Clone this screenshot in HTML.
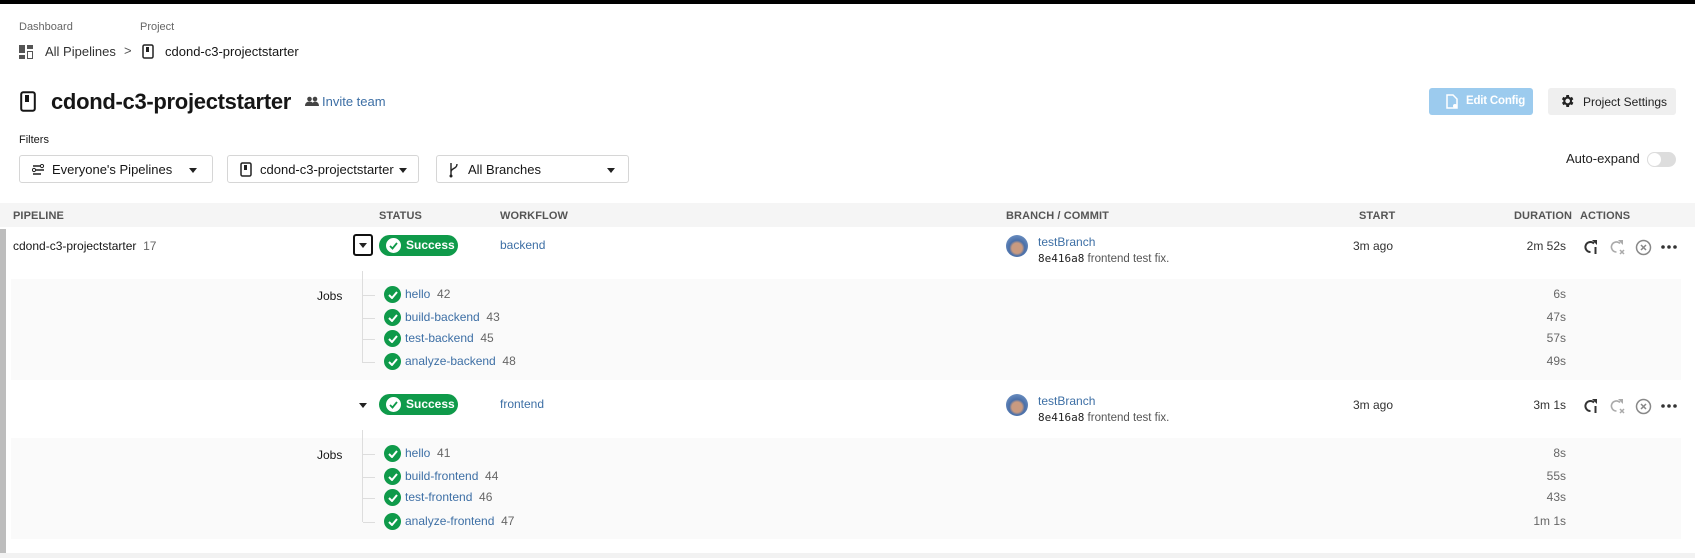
<!DOCTYPE html>
<html><head><meta charset="utf-8"><style>
*{box-sizing:border-box;margin:0;padding:0}
body{width:1695px;height:558px;overflow:hidden;background:#fff;font-family:"Liberation Sans",sans-serif;color:#161616;position:relative}
.a{position:absolute;white-space:nowrap}
.lnk{color:#3d6fa5}
.g{color:#666}
.hd{font-size:11px;font-weight:bold;color:#555;letter-spacing:.1px}
.dd{position:absolute;top:155px;height:28px;border:1px solid #d6d6d6;border-radius:3px;background:#fff;font-size:13px}
.dd span{position:absolute;top:6px}
.tri{position:absolute;width:0;height:0;border-left:4px solid transparent;border-right:4px solid transparent;border-top:5px solid #222}
.pill{position:absolute;width:79px;height:21px;border-radius:11px;background:#0f9a4a;color:#fff;font-size:12px;font-weight:bold}
.pill i{position:absolute;left:7px;top:3px;width:15px;height:15px;border-radius:50%;background:#fff}
.pill b{position:absolute;left:27px;top:3px}
.chk{position:absolute;width:17px;height:17px;border-radius:50%;background:#0f9a4a}
.job{position:absolute;font-size:12px}
.dur{position:absolute;font-size:12px;color:#666;text-align:right;width:60px}
</style></head><body>
<div class="a" style="left:0;top:0;width:1695px;height:4px;background:#000"></div>
<div class="a g" style="left:19px;top:21px;font-size:11px">Dashboard</div>
<div class="a g" style="left:140px;top:21px;font-size:11px">Project</div>
<svg class="a" style="left:19px;top:45px" width="15" height="14"><rect x="0" y="0" width="6" height="8" fill="#555"/><rect x="8" y="0" width="6" height="4" fill="#555"/><rect x="0" y="10" width="6" height="4" fill="#555"/><rect x="8.5" y="6.5" width="5" height="7" fill="none" stroke="#555"/></svg>
<div class="a" style="left:45px;top:44px;font-size:13px;color:#333">All Pipelines</div>
<div class="a" style="left:124px;top:43px;font-size:13px;color:#555">&gt;</div>
<svg class="a" style="left:142px;top:44px" width="12" height="15"><rect x="1" y="1" width="10" height="13" rx="1.5" fill="none" stroke="#222" stroke-width="1.5"/><rect x="4" y="3" width="3" height="5" fill="#222"/></svg>
<div class="a" style="left:165px;top:44px;font-size:13px">cdond-c3-projectstarter</div>

<svg class="a" style="left:20px;top:91px" width="16" height="21"><rect x="1.2" y="1.2" width="13.6" height="18.6" rx="2" fill="none" stroke="#161616" stroke-width="2"/><rect x="5" y="4" width="4" height="7" fill="#161616"/></svg>
<div class="a" style="left:51px;top:89px;font-size:22px;font-weight:bold;letter-spacing:-0.3px">cdond-c3-projectstarter</div>
<svg class="a" style="left:305px;top:96px" width="14" height="10"><circle cx="4.5" cy="3" r="2.3" fill="#444"/><circle cx="10" cy="3" r="2.3" fill="#444"/><path d="M0 10c0-3 2-4.5 4.5-4.5S9 7 9 10zM7 10c0-2 1-4.5 3-4.5s4 1.5 4 4.5z" fill="#444"/></svg>
<div class="a lnk" style="left:322px;top:94px;font-size:13px">Invite team</div>

<div class="a" style="left:1429px;top:88px;width:104px;height:27px;background:#9ccbee;border-radius:3px"></div>
<svg class="a" style="left:1446px;top:94px" width="12" height="15"><path d="M1 1h6l4 4v9H1z" fill="none" stroke="#fff" stroke-width="1.5"/><circle cx="9" cy="12" r="2" fill="#fff"/></svg>
<div class="a" style="left:1466px;top:95px;font-size:11.5px;font-weight:bold;color:#fff;letter-spacing:-0.2px">Edit Config</div>
<div class="a" style="left:1548px;top:88px;width:128px;height:27px;background:#efefef;border-radius:3px"></div>
<svg class="a" style="left:1559px;top:93px" width="16" height="16" viewBox="0 0 24 24"><path fill="#222" d="M19.4 13a7.5 7.5 0 0 0 0-2l2.1-1.6-2-3.5-2.5 1a7 7 0 0 0-1.7-1L15 3h-4l-.4 2.9a7 7 0 0 0-1.7 1l-2.5-1-2 3.5L6.6 11a7.5 7.5 0 0 0 0 2l-2.1 1.6 2 3.5 2.5-1a7 7 0 0 0 1.7 1L11 21h4l.4-2.9a7 7 0 0 0 1.7-1l2.5 1 2-3.5zM13 15.5a3.5 3.5 0 1 1 0-7 3.5 3.5 0 0 1 0 7z"/></svg>
<div class="a" style="left:1583px;top:95px;font-size:12px;color:#222">Project Settings</div>

<div class="a" style="left:19px;top:134px;font-size:11px">Filters</div>
<div class="dd" style="left:19px;width:194px"><svg style="position:absolute;left:12px;top:8px" width="13" height="11"><path d="M1 2h8M4 6h8M1 10h8" stroke="#222" stroke-width="1.4" fill="none"/><circle cx="10" cy="2" r="1.6" fill="none" stroke="#222"/><circle cx="2" cy="6" r="1.6" fill="none" stroke="#222"/></svg><span style="left:32px">Everyone's Pipelines</span><div class="tri" style="left:169px;top:12px"></div></div>
<div class="dd" style="left:227px;width:192px"><svg style="position:absolute;left:12px;top:6px" width="12" height="15"><rect x="1" y="1" width="10" height="13" rx="1.5" fill="none" stroke="#222" stroke-width="1.5"/><rect x="4" y="3" width="3" height="5" fill="#222"/></svg><span style="left:32px">cdond-c3-projectstarter</span><div class="tri" style="left:171px;top:12px"></div></div>
<div class="dd" style="left:436px;width:193px"><svg style="position:absolute;left:12px;top:6px" width="10" height="16"><path d="M2 1v14M2 10c0-4 6-3 6-8" stroke="#222" stroke-width="1.4" fill="none"/><circle cx="2" cy="14" r="1.5" fill="#222"/></svg><span style="left:31px">All Branches</span><div class="tri" style="left:170px;top:12px"></div></div>

<div class="a" style="left:1566px;top:151px;font-size:13px;color:#222">Auto-expand</div>
<div class="a" style="left:1647px;top:152px;width:29px;height:15px;border-radius:8px;background:#ddd"></div>
<div class="a" style="left:1647px;top:152px;width:15px;height:15px;border-radius:50%;background:#fff;border:1px solid #ddd"></div>

<div class="a" style="left:0;top:203px;width:1695px;height:24px;background:#f5f5f5"></div>
<div class="a hd" style="left:13px;top:210px">PIPELINE</div>
<div class="a hd" style="left:379px;top:210px">STATUS</div>
<div class="a hd" style="left:500px;top:210px">WORKFLOW</div>
<div class="a hd" style="left:1006px;top:210px">BRANCH / COMMIT</div>
<div class="a hd" style="left:1359px;top:210px">START</div>
<div class="a hd" style="left:1514px;top:210px">DURATION</div>
<div class="a hd" style="left:1580px;top:210px">ACTIONS</div>

<div class="a" style="left:0;top:229px;width:6px;height:324px;background:#bdbdbd"></div>
<div class="a" style="left:0;top:553px;width:1695px;height:5px;background:#f2f2f2"></div>

<div class="a" style="left:13px;top:239px;font-size:12px">cdond-c3-projectstarter <span class="g">&nbsp;17</span></div>
<div class="a" style="left:353px;top:234px;width:20px;height:22px;border:2px solid #111;border-radius:3px"></div>
<div class="tri" style="left:359px;top:243px"></div>
<div class="pill" style="left:379px;top:235px"><i></i><svg style="position:absolute;left:10px;top:7px" width="9" height="8"><path d="M1 4l2.5 2.5L8 1" stroke="#0f9a4a" stroke-width="1.8" fill="none"/></svg><b>Success</b></div>
<div class="a lnk" style="left:500px;top:238px;font-size:12px">backend</div>
<div class="a" style="left:1006px;top:235px;width:22px;height:22px;border-radius:50%;background:radial-gradient(circle at 50% 60%,#c99a80 0 30%,#4a6fa8 45%,#7fa2d0)"></div>
<div class="a lnk" style="left:1038px;top:235px;font-size:12px">testBranch</div>
<div class="a" style="left:1038px;top:252px;font-size:11.5px;color:#555"><span style="font-family:'DejaVu Sans Mono',monospace;color:#222;font-size:11px">8e416a8</span> frontend test fix.</div>
<div class="a" style="left:1353px;top:239px;font-size:12px;color:#333">3m ago</div>
<div class="dur" style="left:1506px;top:239px;color:#333">2m 52s</div>

<div class="a" style="left:11px;top:279px;width:1670px;height:101px;background:#fafafa"></div>
<div class="a" style="left:362px;top:271px;width:1px;height:92px;background:#ddd"></div>
<div class="a" style="left:317px;top:289px;font-size:12px">Jobs</div>

<div class="tri" style="left:359px;top:403px"></div>
<div class="pill" style="left:379px;top:394px"><i></i><svg style="position:absolute;left:10px;top:7px" width="9" height="8"><path d="M1 4l2.5 2.5L8 1" stroke="#0f9a4a" stroke-width="1.8" fill="none"/></svg><b>Success</b></div>
<div class="a lnk" style="left:500px;top:397px;font-size:12px">frontend</div>
<div class="a" style="left:1006px;top:394px;width:22px;height:22px;border-radius:50%;background:radial-gradient(circle at 50% 60%,#c99a80 0 30%,#4a6fa8 45%,#7fa2d0)"></div>
<div class="a lnk" style="left:1038px;top:394px;font-size:12px">testBranch</div>
<div class="a" style="left:1038px;top:411px;font-size:11.5px;color:#555"><span style="font-family:'DejaVu Sans Mono',monospace;color:#222;font-size:11px">8e416a8</span> frontend test fix.</div>
<div class="a" style="left:1353px;top:398px;font-size:12px;color:#333">3m ago</div>
<div class="dur" style="left:1506px;top:398px;color:#333">3m 1s</div>

<div class="a" style="left:11px;top:438px;width:1670px;height:101px;background:#fafafa"></div>
<div class="a" style="left:362px;top:430px;width:1px;height:92px;background:#ddd"></div>
<div class="a" style="left:317px;top:448px;font-size:12px">Jobs</div>

<div id="jobs"></div>
<script>
var J=[[295,"hello","42","6s"],[318,"build-backend","43","47s"],[339,"test-backend","45","57s"],[362,"analyze-backend","48","49s"],
[454,"hello","41","8s"],[477,"build-frontend","44","55s"],[498,"test-frontend","46","43s"],[522,"analyze-frontend","47","1m 1s"]];
var h="";J.forEach(function(j){var y=j[0];
h+='<div class="a" style="left:363px;top:'+y+'px;width:12px;height:1px;background:#ddd"></div>';
h+='<div class="chk" style="left:384px;top:'+(y-9)+'px"><svg style="position:absolute;left:4px;top:5px" width="10" height="8"><path d="M1 4l3 3L9 1" stroke="#fff" stroke-width="2" fill="none"/></svg></div>';
h+='<div class="job lnk" style="left:405px;top:'+(y-8)+'px">'+j[1]+' <span class="g">&nbsp;'+j[2]+'</span></div>';
h+='<div class="dur" style="left:1506px;top:'+(y-8)+'px">'+j[3]+'</div>';});
var A=[239,398];A.forEach(function(y){
h+='<svg class="a" style="left:1584px;top:'+y+'px" width="14" height="16"><path d="M10 4.5A5 5 0 1 0 6.5 13" stroke="#333" stroke-width="2" fill="none"/><path d="M8 1h5v5z" fill="#333"/><rect x="10.5" y="8" width="2" height="7" fill="#333"/></svg>';
h+='<svg class="a" style="left:1610px;top:'+y+'px" width="16" height="17"><path d="M10 4.5A5 5 0 1 0 6.5 13" stroke="#aaa" stroke-width="1.6" fill="none"/><path d="M8 1h5v5z" fill="#aaa"/><path d="M10 11l4 4M14 11l-4 4" stroke="#aaa" stroke-width="1.5"/></svg>';
h+='<svg class="a" style="left:1635px;top:'+y+'px" width="17" height="17"><circle cx="8.5" cy="8.5" r="7" stroke="#888" stroke-width="1.5" fill="none"/><path d="M6 6l5 5M11 6l-5 5" stroke="#888" stroke-width="1.5"/></svg>';
h+='<svg class="a" style="left:1661px;top:'+(y+6)+'px" width="16" height="4"><circle cx="2" cy="2" r="1.8" fill="#333"/><circle cx="8" cy="2" r="1.8" fill="#333"/><circle cx="14" cy="2" r="1.8" fill="#333"/></svg>';});
document.getElementById("jobs").innerHTML=h;
</script>
</body></html>
